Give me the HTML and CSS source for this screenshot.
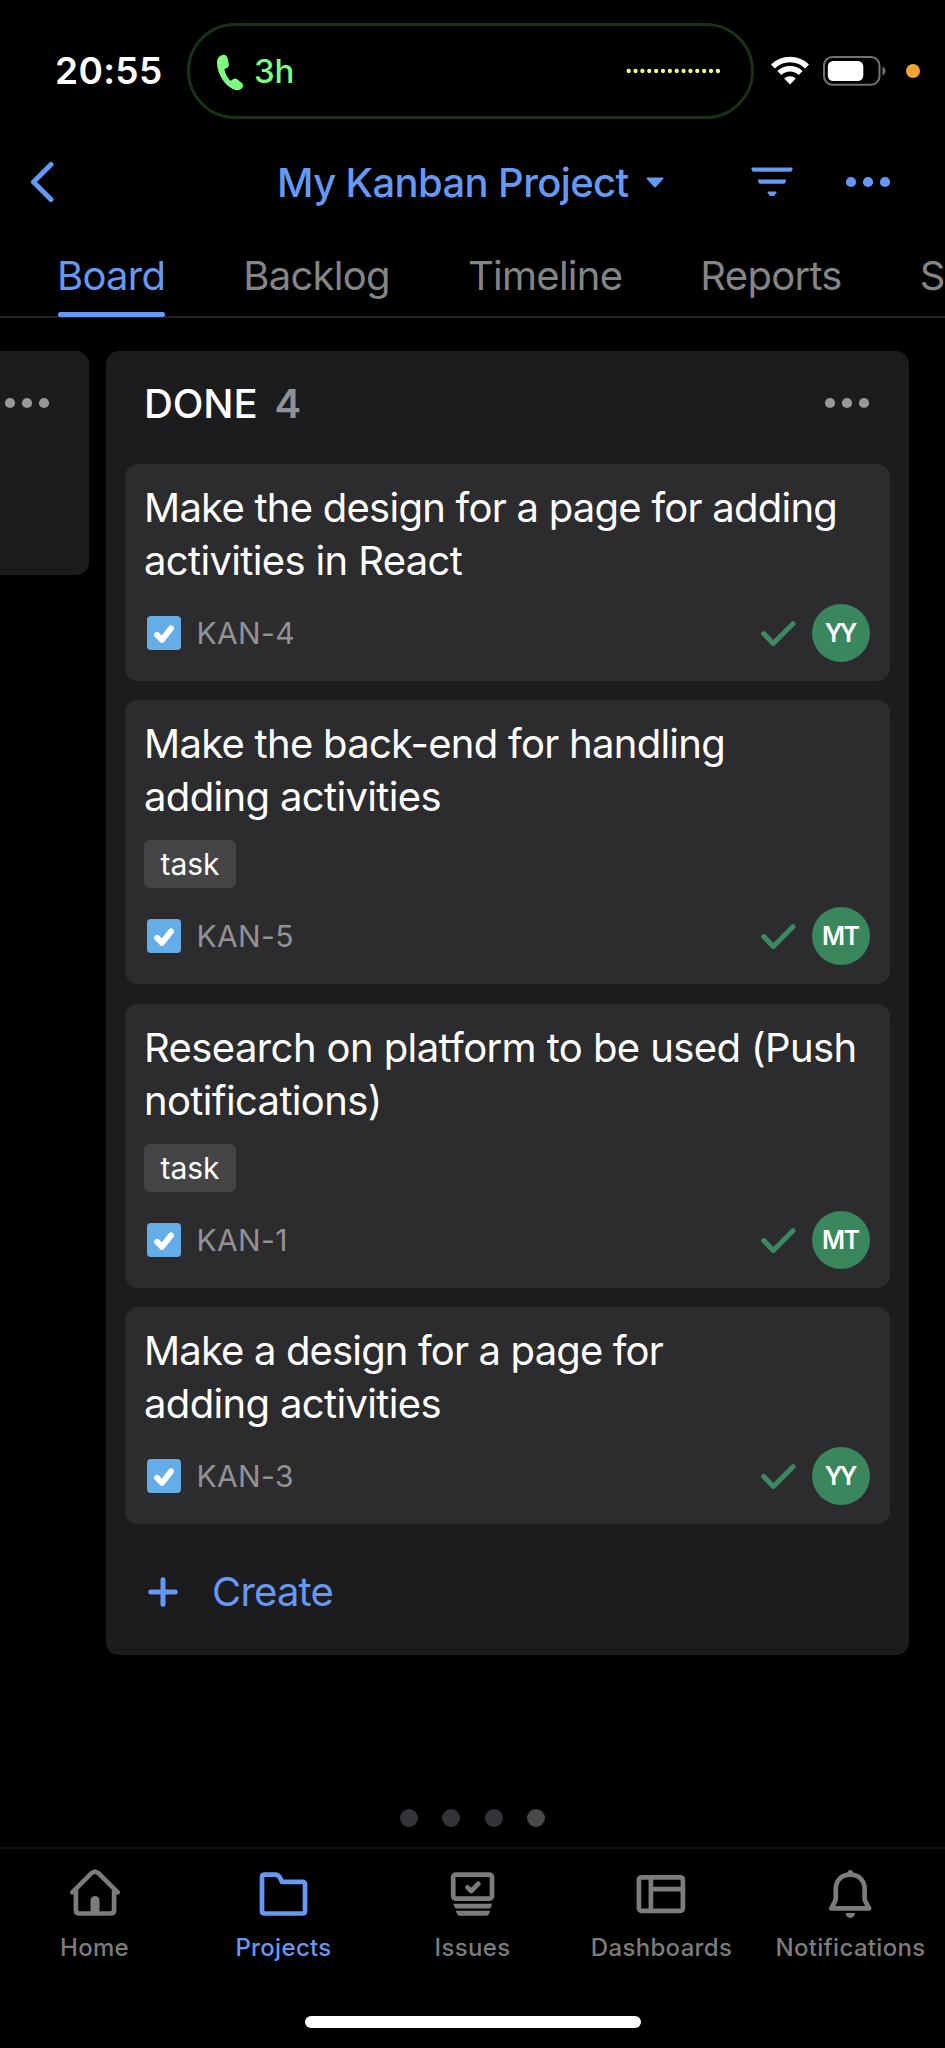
FILE: index.html
```
<!DOCTYPE html>
<html lang="en">
<head>
<meta charset="utf-8">
<title>My Kanban Project</title>
<link rel="stylesheet" href="styles.css">
</head>
<body>
<svg class="defs" aria-hidden="true">
  <symbol id="dots" viewBox="0 0 46 12"><circle cx="6" cy="6" r="5.1"/><circle cx="23" cy="6" r="5.1"/><circle cx="40" cy="6" r="5.1"/></symbol>
  <symbol id="task-box" viewBox="0 0 34 34"><rect width="34" height="34" rx="4" fill="#65ade6"/><path d="M10 18.8l5 5.1L24 12.4" fill="none" stroke="#fff" stroke-width="5.8" stroke-linecap="round" stroke-linejoin="round"/></symbol>
  <symbol id="check" viewBox="0 0 36 28"><path d="M3.7 14.6l9.6 9.8L33 4.7" fill="none" stroke="#3d8763" stroke-width="5" stroke-linecap="round" stroke-linejoin="round"/></symbol>
</svg>
<div class="screen">
  <header class="status">
    <span class="time">20:55</span>
    <div class="island">
      <svg class="phone" viewBox="0 0 28 38"><path d="M5.6 1.3C2.4 2.6.8 5.3 1 9.6c.5 10.200 7.300 21.700 16.200 25.700 4 1.700 7.300.9 9.300-1.900 1.100-1.600.7-3-.7-4.300l-4.600-3.900c-1.300-1.100-2.600-1-3.900-.1l-1.600 1.200c-.8.5-1.400.4-2.100-.3-2.300-2.700-4.100-6.100-5-9.500-.2-.9.100-1.500.9-1.900l1.800-.9c1.200-.7 1.800-1.600 1.600-3.100L11.500 4C11.100 1.500 8.900 0 5.600 1.300z"/></svg>
      <span class="call">3h</span>
      <svg class="wave" viewBox="0 0 94 6"><path d="M2.700 3H92"/></svg>
    </div>
    <svg class="wifi" viewBox="0 0 38 30"><g fill="none" stroke="#fff" stroke-width="5.600"><path d="M1.900 10.500a24.500 24.500 0 0 1 34.200 0"/><path d="M8.300 17a15.400 15.400 0 0 1 21.400 0"/></g><path d="M13.200 22.500a8.500 8.500 0 0 1 11.600 0L19 28.500z" fill="#fff"/></svg>
    <svg class="battery" viewBox="0 0 64 30"><rect x="1" y="1" width="55.500" height="27.800" rx="8.500" fill="none" stroke="#727272" stroke-width="2"/><rect x="4.800" y="5" width="35.500" height="20" rx="5.500" fill="#fff"/><path d="M59.500 10.500c4 2 4 7 0 9z" fill="#727272"/></svg>
    <span class="mic-dot"></span>
  </header>

  <nav class="topbar">
    <svg class="back" viewBox="0 0 26 42"><path d="M21 3.500L3.500 21 21 38.500"/></svg>
    <div class="project"><span>My Kanban Project</span><svg class="caret" viewBox="0 0 18 11"><path d="M1.500.5h15c1 0 1.300.8.7 1.500l-7 7.700c-.8.9-1.600.9-2.400 0L.8 2C.2 1.300.5.500 1.500.5z"/></svg></div>
    <svg class="filter" viewBox="0 0 42 30"><path d="M1 .5h40c.6 0 .8.400.6.900L40.700 4c-.2.500-.5.700-1 .7H2.300c-.5 0-.8-.2-1-.7L.4 1.400C.2.900.4.500 1 .5zM7.500 12.500h27c.6 0 .8.400.600.9l-1 2.600c-.2.500-.5.700-1 .7H8.900c-.5 0-.8-.2-1-.7l-1-2.600c-.2-.5 0-.9.600-.9zM17 24.500h8c.6 0 .8.400.5.900l-1.900 3.100c-.2.400-.5.600-1 .6h-3.200c-.5 0-.8-.2-1-.6l-1.900-3.100c-.3-.5-.1-.9.500-.9z"/></svg>
    <svg class="more blue"><use href="#dots"/></svg>
  </nav>

  <div class="tabs">
    <span class="tab active">Board</span>
    <span class="tab">Backlog</span>
    <span class="tab">Timeline</span>
    <span class="tab">Reports</span>
    <span class="tab">S</span>
  </div>

  <main class="board">
    <section class="column previous"><svg class="more"><use href="#dots"/></svg></section>
    <section class="column">
      <div class="column-head"><h2>DONE</h2><span class="count">4</span><svg class="more"><use href="#dots"/></svg></div>
      <div class="cards">
        <article class="card">
          <h3><span class="a">Make the design for a page for adding</span><br>activities in React</h3>
          <div class="meta"><svg class="box"><use href="#task-box"/></svg><span class="key">KAN-4</span><svg class="check"><use href="#check"/></svg><span class="avatar yy">YY</span></div>
        </article>
        <article class="card">
          <h3><span class="b">Make the back-end for handling</span><br>adding activities</h3>
          <span class="tag">task</span>
          <div class="meta"><svg class="box"><use href="#task-box"/></svg><span class="key">KAN-5</span><svg class="check"><use href="#check"/></svg><span class="avatar">MT</span></div>
        </article>
        <article class="card">
          <h3><span class="c">Research on platform to be used (Push</span><br>notifications)</h3>
          <span class="tag">task</span>
          <div class="meta"><svg class="box"><use href="#task-box"/></svg><span class="key">KAN-1</span><svg class="check"><use href="#check"/></svg><span class="avatar">MT</span></div>
        </article>
        <article class="card">
          <h3><span class="d">Make a design for a page for</span><br>adding activities</h3>
          <div class="meta"><svg class="box"><use href="#task-box"/></svg><span class="key">KAN-3</span><svg class="check"><use href="#check"/></svg><span class="avatar yy">YY</span></div>
        </article>
      </div>
      <div class="create"><svg viewBox="0 0 30 30"><path d="M15 2.800v24.400M2.800 15h24.400"/></svg><span>Create</span></div>
    </section>
  </main>

  <div class="pager"><i></i><i></i><i></i><i class="current"></i></div>

  <footer class="tabbar">
    <div class="item"><svg viewBox="0 0 60 60"><path class="line" d="M7.300 32.300L26.300 13.400Q30 9.900 33.700 13.400L52.700 32.300M10.900 30V50Q10.900 53.500 14.400 53.500H45.600Q49.100 53.500 49.100 50V30"/><path d="M25.500 53.500V40.500a4.500 4.500 0 0 1 9 0v13z"/></svg><span>Home</span></div>
    <div class="item selected"><svg viewBox="0 0 60 60"><path class="line" d="M10.500 14.700H21Q24.700 14.700 26.200 18L28 21.900H48.500Q51 21.900 51 24.400V51Q51 53.500 48.500 53.500H10.500Q8 53.500 8 51V17.200Q8 14.700 10.500 14.700Z"/></svg><span>Projects</span></div>
    <div class="item"><svg viewBox="0 0 60 60"><rect class="line" x="10.200" y="14.600" width="38.800" height="24" rx="2.500"/><path class="line" d="M24.500 27.400l3.700 3.600 7.200-7.300"/><path d="M10.300 43.700h39l-1.300 3.200q-.6 1.600-2 1.600H14q-1.700 0-2.400-1.600zM12.700 50.700h34.600l-1.300 3.400q-.7 1.700-2.400 1.700H16.500q-1.700 0-2.400-1.700z"/></svg><span>Issues</span></div>
    <div class="item"><svg viewBox="0 0 60 60"><rect class="line" x="6.900" y="17.300" width="44" height="33.500" rx="2.500"/><path class="line" d="M18.900 17.300v33.500M18.900 29.200h32"/></svg><span>Dashboards</span></div>
    <div class="item"><svg viewBox="0 0 60 60"><path class="line bell" d="M29.200 14.600C20.500 14.600 14.800 20.500 14.800 28.500V38.500Q14.800 40.300 13.700 42L10.300 48.400H48.100L44.700 42Q43.600 40.300 43.600 38.500V28.500C43.600 20.500 37.900 14.600 29.200 14.600Z"/><path d="M26.500 14v-1.300a2.700 2.700 0 0 1 5.400 0V14zM24.600 53h9.400a4.700 5 0 0 1-9.400 0z"/></svg><span>Notifications</span></div>
  </footer>
  <div class="home-indicator"></div>
</div>
</body>
</html>
```

FILE: styles.css
```
* { box-sizing: border-box; }
body { margin: 0; background: #000; font-family: Inter, "Liberation Sans", sans-serif; color: #fff; }
svg { display: block; flex: none; }
.defs { position: absolute; width: 0; height: 0; }
.screen { width: 945px; height: 2048px; overflow: hidden; display: flex; flex-direction: column; }
.screen > * { flex: none; }

.status { height: 119px; padding-top: 22px; display: flex; align-items: center; }
.time { width: 132px; margin-left: 55px; font-size: 37px; font-weight: 600; letter-spacing: .37px; line-height: 40px; }
.island { width: 567px; height: 96px; border: 3px solid #173315; border-radius: 48px; display: flex; align-items: center; padding: 0 31px 0 26px; margin-top: 1px; }
.phone { width: 28px; height: 38px; fill: #7cff80; margin-top: 3px; }
.call { margin-left: 10px; font-size: 33px; font-weight: 500; color: #7cff80; letter-spacing: -.3px; }
.wave { width: 94px; height: 6px; margin-left: auto; }
.wave path { stroke: #fbff7e; stroke-width: 4.300; stroke-linecap: round; stroke-dasharray: 0 6.860; }
.wifi { width: 38px; height: 30px; margin-left: 17px; }
.battery { width: 64px; height: 30px; margin-left: 14px; }
.mic-dot { width: 14px; height: 14px; border-radius: 50%; background: #f6a336; margin-left: 19px; }

.topbar { height: 126px; display: flex; align-items: center; color: #6698f5; }
.back { width: 26px; height: 42px; margin-left: 30px; fill: none; stroke: #6698f5; stroke-width: 5; stroke-linecap: round; stroke-linejoin: round; }
.project { margin-left: 221px; width: 474px; display: flex; align-items: center; font-size: 40px; font-weight: 500; letter-spacing: -.62px; }
.caret { width: 18px; height: 11px; margin-left: 17px; fill: #6698f5; }
.filter { width: 42px; height: 30px; fill: #6698f5; }
.more { width: 46px; height: 12px; fill: #98989b; }
.blue { fill: #6698f5; margin-left: 52px; }

.tabs { height: 73px; border-bottom: 2px solid #222224; display: flex; gap: 78px; padding-left: 57px; }
.tab { height: 72px; padding-top: 5px; font-size: 40px; line-height: 51px; letter-spacing: -.72px; color: #858587; }
.tab.active { color: #6698f5; display: flex; flex-direction: column; justify-content: space-between; }
.tab.active::after { content: ""; height: 5px; margin-left: 1px; border-radius: 2.500px; background: #6698f5; }

.board { height: 1337px; padding-top: 33px; display: flex; align-items: flex-start; gap: 17px; }
.column { width: 802.500px; height: 1303.500px; background: #1c1c1e; border-radius: 13px; padding: 0 19px; }
.previous { width: 89px; height: 224px; border-radius: 0 13px 13px 0; padding: 46px 0 0 4px; }
.column-head { height: 113px; display: flex; align-items: center; padding: 0 16px 9px 19px; }
h2 { margin: 0; font-size: 40px; font-weight: 500; letter-spacing: -.1px; }
.count { margin-left: 17px; font-size: 40px; font-weight: 600; color: #929296; }
.column-head .more { margin-left: auto; margin-right: 3.500px; }
.cards { display: grid; gap: 19.200px; }
.card { background: #2c2c2e; border-radius: 13px; padding: 17px 19.500px 19px 19px; display: flex; flex-direction: column; align-items: flex-start; }
h3 { margin: 0; font-size: 40px; font-weight: 400; line-height: 53px; letter-spacing: -.65px; white-space: nowrap; }
.a { letter-spacing: -.75px; }
.b { letter-spacing: -.72px; }
.c { letter-spacing: -.59px; }
.d { letter-spacing: -.85px; }
.tag { width: 92px; height: 48px; margin-top: 17.300px; margin-bottom: 2px; border-radius: 6px; background: #444446; font-size: 30px; line-height: 48px; text-align: center; }
.meta { width: 100%; margin-top: 17px; display: flex; align-items: center; }
.box { width: 34px; height: 34px; margin-left: 2.500px; }
.key { margin-left: 16px; font-size: 30px; letter-spacing: .38px; color: #929296; }
.check { width: 36px; height: 28px; margin-left: auto; margin-right: 16px; }
.avatar { width: 58px; height: 58px; border-radius: 50%; background: #3a865d; font-size: 25px; line-height: 58px; font-weight: 600; text-align: center; letter-spacing: -1.600px; text-indent: -1.600px; }
.yy { letter-spacing: -3px; text-indent: -3px; }
.create { height: 130px; padding: 5px 0 0 23px; display: flex; align-items: center; font-size: 40px; letter-spacing: -.8px; color: #6698f5; }
.create svg { width: 30px; height: 30px; margin-right: 34px; fill: none; stroke: #6698f5; stroke-width: 5; stroke-linecap: round; }

.pager { height: 192px; padding-top: 154px; display: flex; justify-content: center; gap: 24.300px; }
.pager i { width: 18px; height: 18px; border-radius: 50%; background: #343438; }
.pager .current { background: #4a4a4c; }

.tabbar { height: 169px; border-top: 2px solid #121213; display: grid; grid-template-columns: repeat(5, 189px); color: #7c7c7c; fill: #7c7c7c; stroke: #7c7c7c; }
.item { padding-top: 11px; display: flex; flex-direction: column; align-items: center; font-size: 24px; font-weight: 500; line-height: 30px; letter-spacing: .33px; }
.item svg { width: 60px; height: 60px; margin-bottom: 13px; stroke: none; }
.item .line { fill: none; stroke: #7c7c7c; stroke-width: 4.700; stroke-linecap: round; stroke-linejoin: round; }
.selected { color: #6698f5; }
.selected .line { stroke: #6698f5; }
.home-indicator { width: 336px; height: 12px; margin-left: 305px; border-radius: 6px; background: #fff; }
```
